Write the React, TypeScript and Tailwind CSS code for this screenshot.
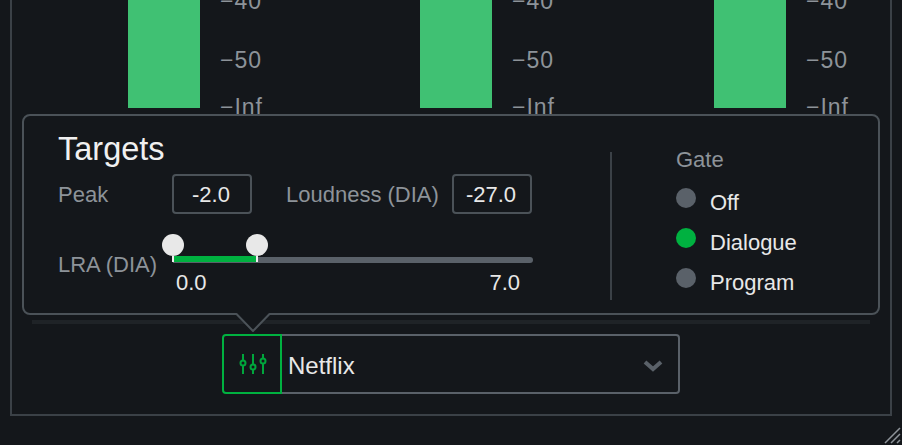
const font = "font-['Liberation_Sans',Arial,sans-serif]";

function Meter({ className }: { className: string }) {
  return (
    <div className={`flex shrink-0 ${className}`}>
      <div className="h-[108px] w-[72px] bg-[#40c173]" />
      <div className="ml-[20px] -mt-[11px] flex flex-col text-[23px] leading-[24px] tracking-[1px] text-[#8d9399]">
        <span>−40</span>
        <span className="mt-[35px]">−50</span>
        <span className="mt-[23px]">−Inf</span>
      </div>
    </div>
  );
}

function Radio({ label, active }: { label: string; active?: boolean }) {
  return (
    <div className="flex h-[40px] items-start gap-[14px]">
      <span className={`h-[20px] w-[20px] rounded-full ${active ? "bg-[#00b140]" : "bg-[#5a6169]"}`} />
      <span className="mt-[3px] text-[22px] leading-[24px] text-[#e8e8e8]">{label}</span>
    </div>
  );
}

function ValueBox({ value }: { value: string }) {
  return (
    <div className="flex h-[40px] w-[80px] shrink-0 items-center justify-center rounded-[4px] border-2 border-[#4b5258] pr-[2px] text-[22px] text-[#e8e8e8]">
      {value}
    </div>
  );
}

export default function App() {
  return (
    <div className={`relative h-[445px] w-[902px] overflow-hidden bg-[#14171b] ${font}`}>
      <div className="ml-[10px] flex h-[416px] w-[882px] flex-col border-x-2 border-b-2 border-[#3b4147]">
        <div className="flex h-[114px] shrink-0 pl-[116px]">
          <Meter className="w-[292px]" />
          <Meter className="w-[294px]" />
          <Meter className="w-[200px]" />
        </div>

        <div className="relative z-10 ml-[10px] flex h-[201px] w-[858px] shrink-0 rounded-[8px] border-2 border-[#4b5258] bg-[#14171b]">
          <div className="w-[586px] shrink-0 pl-[34px] pt-[16px]">
            <div className="h-[35px] text-[32.5px] leading-[35px] text-[#f0f0f0]">Targets</div>
            <div className="mt-[7px] flex items-center">
              <span className="w-[114px] text-[22px] text-[#8d9399]">Peak</span>
              <ValueBox value="-2.0" />
              <span className="ml-[34px] w-[166px] text-[22px] text-[#8d9399]">Loudness (DIA)</span>
              <ValueBox value="-27.0" />
            </div>
            <div className="mt-[20px] flex">
              <span className="mt-[19px] h-[24px] w-[115px] text-[22px] leading-[24px] text-[#8d9399]">LRA (DIA)</span>
              <div className="w-[360px]">
                <div className="relative mt-[23px] h-[6px] rounded-r-[3px] bg-[#5a6169]">
                  <div className="absolute -top-px -left-px h-[6px] w-[86px] border-x-2 border-x-[#f0f0f0] bg-[#00b140]" />
                  <div className="absolute -left-[11px] -top-[23px] h-[22px] w-[22px] rounded-full bg-[#e8e8e8]" />
                  <div className="absolute left-[73px] -top-[23px] h-[22px] w-[22px] rounded-full bg-[#e8e8e8]" />
                </div>
                <div className="mt-[8px] flex justify-between pl-[3px] pr-[13px] text-[22px] leading-[24px] text-[#e8e8e8]">
                  <span>0.0</span>
                  <span>7.0</span>
                </div>
              </div>
            </div>
          </div>

          <div className="mt-[36px] h-[148px] w-[2px] shrink-0 bg-[#3b4147]" />

          <div className="pl-[64px] pt-[32px]">
            <div className="mb-[16px] text-[22px] leading-[24px] text-[#8d9399]">Gate</div>
            <Radio label="Off" />
            <Radio label="Dialogue" active />
            <Radio label="Program" />
          </div>

          <svg className="absolute left-[211px] top-[197px]" width="36" height="20" viewBox="0 0 36 20" fill="none">
            <path d="M0 0H36V1L18 18L0 1Z" fill="#14171b" />
            <path d="M0 1H1.5L18 18L34.5 1H36" stroke="#4b5258" strokeWidth="2" strokeLinejoin="round" />
          </svg>
        </div>

        <div className="ml-[20px] mt-[5px] h-[4px] w-[838px] shrink-0 bg-[#1f2327]" />

        <div className="ml-[210px] mt-[10px] flex h-[60px] w-[458px] shrink-0">
          <div className="flex h-[60px] w-[60px] shrink-0 items-center justify-center rounded-l-[4px] border-2 border-[#00b140]">
            <svg width="30" height="20" viewBox="0 0 30 20" fill="none" stroke="#00a63c" strokeWidth="2">
              <path d="M6 0V20M16 0V20M26 0V20" />
              <circle cx="6" cy="9" r="2.5" fill="#14171b" />
              <circle cx="16" cy="13" r="2.5" fill="#14171b" />
              <circle cx="26" cy="7" r="2.5" fill="#14171b" />
            </svg>
          </div>
          <div className="flex flex-1 items-center justify-between rounded-r-[4px] border-y-2 border-r-2 border-[#5a6169] pl-[6px] pr-[15px]">
            <span className="mt-[4px] text-[24px] text-[#e8e8e8]">Netflix</span>
            <svg className="mt-[4px]" width="20" height="12" viewBox="0 0 20 12" fill="none" stroke="#5a6169" strokeWidth="4">
              <path d="M2 2L10 9L18 2" />
            </svg>
          </div>
        </div>
      </div>

      <svg className="absolute left-[882px] top-[425px]" width="20" height="20" viewBox="0 0 20 20" fill="none" stroke="#8d9399" strokeWidth="1.5">
        <path d="M3 18L18 3M9 18L18 9M15 18L18 15" />
      </svg>
    </div>
  );
}
